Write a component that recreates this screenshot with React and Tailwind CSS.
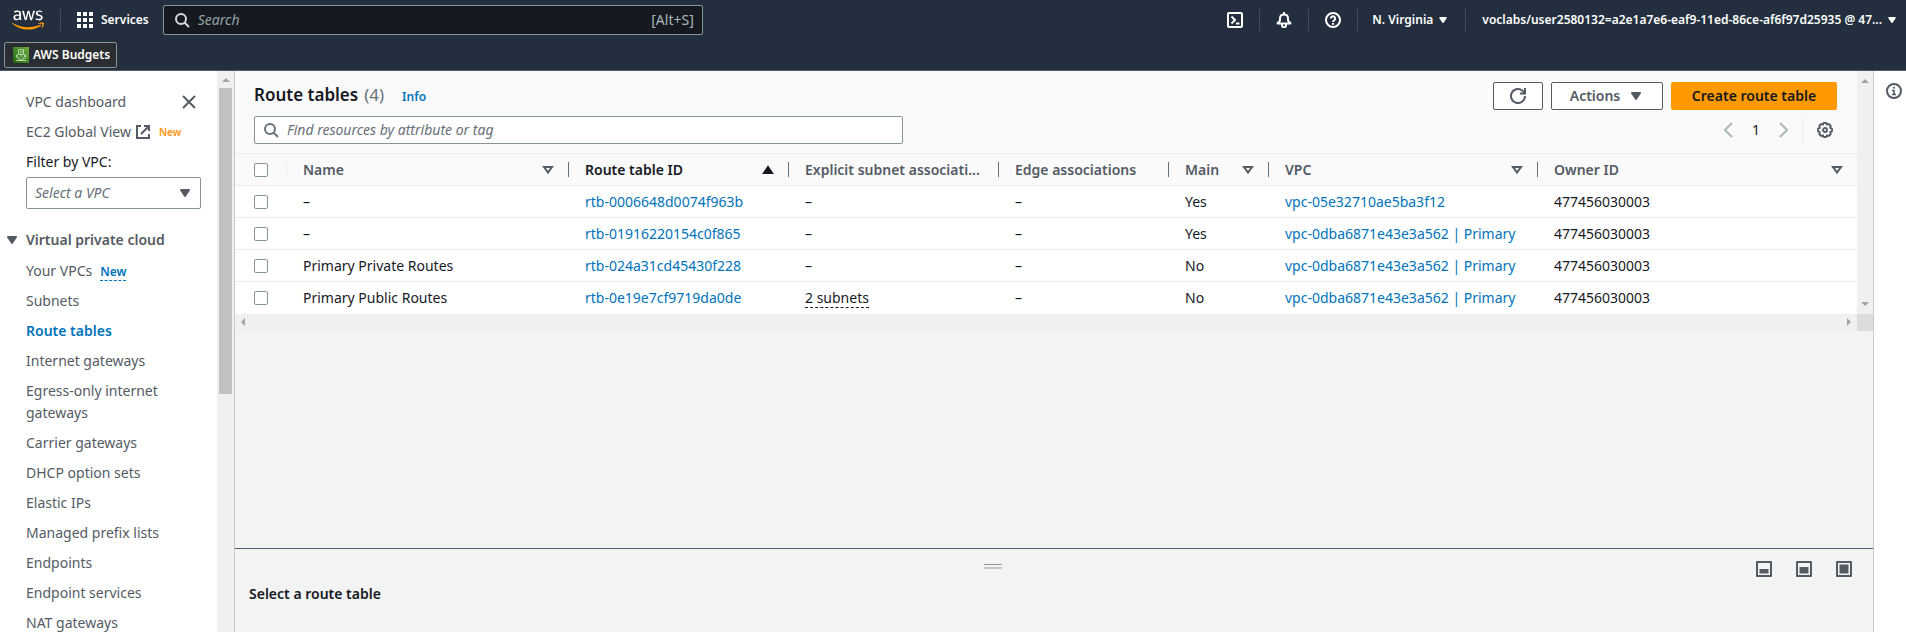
import React from "react";
import { FaAws } from "react-icons/fa";

function Svg({ size = 16, className = "", children }) {
  return (
    <svg viewBox="0 0 16 16" width={size} height={size} fill="none" stroke="currentColor" strokeWidth="2" className={`shrink-0 ${className}`} aria-hidden="true">
      {children}
    </svg>
  );
}

const SearchIcon = ({ className }) => (
  <Svg className={className}>
    <circle cx="7" cy="7" r="5" />
    <path d="M15 15l-4.5-4.5" />
  </Svg>
);
const CaretDown = ({ className, size = 16 }) => (
  <Svg size={size} className={className}>
    <path d="M4 5h8l-4 6z" fill="currentColor" strokeLinejoin="round" />
  </Svg>
);
const SortNone = () => (
  <Svg size={16}>
    <path d="M4 5h8l-4 5.6z" />
  </Svg>
);
const SortAsc = () => (
  <Svg size={16}>
    <path d="M4 11h8l-4-6z" fill="currentColor" />
  </Svg>
);
const CloseIcon = () => (
  <Svg size={16}>
    <path d="M2 2l12 12M14 2L2 14" />
  </Svg>
);
const ExternalIcon = () => (
  <Svg size={16} className="text-[#545b64]">
    <path d="M6 2H2v12h12v-4M9 2h5v5M13.5 2.5L6 10" />
  </Svg>
);
const RefreshIcon = () => (
  <Svg size={16}>
    <path d="M15 8a7 7 0 1 1-2-4.9L15 5M15 0v5.500H10" />
  </Svg>
);
const ShellIcon = () => (
  <Svg size={16}>
    <rect x="1" y="1" width="14" height="14" rx="1" />
    <path d="M4.500 4.500L8 8l-3.500 3.500M9 11.500h3.500" />
  </Svg>
);
const BellIcon = () => (
  <Svg size={16}>
    <path d="M8 0v2M1.500 11.500h13L12 8.500V6.500C12 4 10.500 2.500 8 2.500S4 4 4 6.500v2z" strokeLinejoin="round" />
    <path d="M6 12v1.500a2 1.800 0 0 0 4 0V12" />
  </Svg>
);
const HelpIcon = () => (
  <Svg size={16}>
    <circle cx="8" cy="8" r="7" />
    <path d="M5.800 6.500a2.200 2.200 0 1 1 3.400 1.800C8.400 8.800 8 9.200 8 10M8 11v1.800" />
  </Svg>
);
const InfoIcon = () => (
  <Svg size={16}>
    <circle cx="8" cy="8" r="7" />
    <path d="M6 7.500h2V12M6 11.500h4M7 4.700h2" strokeWidth="1.600" />
  </Svg>
);
const GearIcon = () => (
  <Svg size={16}>
    <path d="M6.600 1h2.800l.6 1.700 1.800-.7 2 2-.8 1.800 2 .8v2.800l-2 .8.8 1.800-2 2-1.800-.8-.6 1.800H6.600L6 13.200l-1.800.8-2-2 .8-1.800L1 9.400V6.600l2-.8L2.200 4l2-2 1.800.7z" strokeWidth="1.800" strokeLinejoin="round" />
    <circle cx="8" cy="8" r="2" strokeWidth="1.800" />
  </Svg>
);
const ChevronIcon = ({ flip }) => (
  <Svg size={16} className={flip ? "rotate-180" : ""}>
    <path d="M12 1L5 8l7 7" />
  </Svg>
);
const PanelIcon = ({ top }) => (
  <Svg size={16}>
    <rect x="1" y="1" width="14" height="14" strokeLinejoin="round" />
    <path d={`M3.500 ${top}h9v${12.5 - top}h-9z`} fill="currentColor" stroke="none" />
  </Svg>
);
const BudgetsIcon = () => (
  <svg viewBox="0 0 16 16" width="16" height="16" className="shrink-0" fill="none" stroke="#e9f5e4" strokeWidth="0.7" aria-hidden="true">
    <defs>
      <linearGradient id="budgets" x1="0" y1="1" x2="1" y2="0">
        <stop offset="0" stopColor="#1b660f" />
        <stop offset="1" stopColor="#6cae3e" />
      </linearGradient>
    </defs>
    <rect width="16" height="16" fill="url(#budgets)" stroke="none" />
    <path d="M5.500 2.800h5v4.700h-5zM6.800 6.200l1-1.300.8.600 1-1.300M3.300 7.500v2.700l2 1.800h1.900v1.500M12.700 7.500v2.700l-2 1.800H8.800v1.500M4.500 7.500v2l1.500 1.300M11.500 7.500v2L10 10.800M8 7.500v3M2.800 13.500h10.400" />
  </svg>
);
const ScrollArrow = ({ d, className = "" }) => (
  <svg viewBox="0 0 8 8" width="8" height="8" fill="#a3a3a3" className={className} aria-hidden="true">
    <path d={d} />
  </svg>
);

const NavDivider = () => <span className="h-[22px] w-px bg-[#414d5c]" />;

function TopBar() {
  return (
    <header className="shrink-0 border-b border-[#545b64] bg-[#232f3e] text-xs font-semibold text-white">
      <div className="flex h-10 items-center">
        <svg width="0" height="0" className="absolute" aria-hidden="true">
          <linearGradient id="aws" gradientUnits="userSpaceOnUse" x1="0" y1="0" x2="0" y2="512">
            <stop offset="0.560" stopColor="#fff" />
            <stop offset="0.560" stopColor="#ff9900" />
          </linearGradient>
        </svg>
        <a href="#home" aria-label="AWS" className="ml-3 mr-4 shrink-0">
          <FaAws fill="url(#aws)" className="h-[26px] w-8" />
        </a>
        <NavDivider />
        <button className="ml-4 flex items-center gap-2">
          <svg viewBox="0 0 16 16" width="16" height="16" fill="#fff" aria-hidden="true">
            <path d="M0 0h4v4H0zM6 0h4v4H6zM12 0h4v4h-4zM0 6h4v4H0zM6 6h4v4H6zM12 6h4v4h-4zM0 12h4v4H0zM6 12h4v4H6zM12 12h4v4h-4z" />
          </svg>
          Services
        </button>
        <label className="ml-3.5 flex h-[30px] w-[540px] items-center rounded-xs border border-[#879596] bg-[#161a20] pl-2.5 pr-2 text-sm font-normal">
          <SearchIcon className="text-[#d5dbdb]" />
          <input aria-label="Search" placeholder="Search" className="ml-2 min-w-0 flex-1 bg-transparent outline-none placeholder:italic placeholder:text-[#95a5a6]" />
          <span className="text-[#aab7b8]">[Alt+S]</span>
        </label>
        <div className="ml-auto flex items-center">
          <button aria-label="CloudShell" className="px-4"><ShellIcon /></button>
          <NavDivider />
          <button aria-label="Notifications" className="px-4"><BellIcon /></button>
          <NavDivider />
          <button aria-label="Help" className="px-4"><HelpIcon /></button>
          <NavDivider />
          <button className="flex items-center gap-1 pl-3.5 pr-4">N. Virginia <CaretDown size={12} /></button>
          <NavDivider />
          <button className="flex items-center gap-1 pl-4 pr-2">
            <span>voclabs/user2580132=a2e1a7e6-eaf9-11ed-86ce-af6f97d25935 @ 47...</span>
            <CaretDown size={12} />
          </button>
        </div>
      </div>
      <div className="flex h-[30px] items-start px-1 pt-0.5">
        <a href="#budgets" className="flex h-[26px] items-center gap-1 rounded-xs border border-[#879596] bg-[#2a2e33] pl-2 pr-1.5">
          <BudgetsIcon />
          AWS Budgets
        </a>
      </div>
    </header>
  );
}

const navLinks = [
  { label: "Your VPCs", isNew: true },
  { label: "Subnets" },
  { label: "Route tables", active: true },
  { label: "Internet gateways" },
  { label: "Egress-only internet gateways" },
  { label: "Carrier gateways" },
  { label: "DHCP option sets" },
  { label: "Elastic IPs" },
  { label: "Managed prefix lists" },
  { label: "Endpoints" },
  { label: "Endpoint services" },
  { label: "NAT gateways" },
];

function SideNav() {
  return (
    <div className="flex w-[235px] shrink-0 border-r border-[#c6cccc] bg-white">
      <nav className="min-w-0 flex-1 overflow-hidden pl-[26px] pr-4 pt-5 leading-[22px] text-[#545b64]">
        <div className="flex items-center justify-between pr-1">
          <a href="#dashboard">VPC dashboard</a>
          <button aria-label="Close navigation"><CloseIcon /></button>
        </div>
        <a href="#global" className="mt-2 flex items-center gap-1">
          EC2 Global View <ExternalIcon />
          <span className="ml-1 text-[10px] font-bold text-[#ff9d2e]">New</span>
        </a>
        <label htmlFor="vpc-filter" className="mt-2 block text-[#16191f]">Filter by VPC:</label>
        <div className="mt-1 grid items-center">
          <select id="vpc-filter" className="col-start-1 row-start-1 h-8 w-full appearance-none rounded-xs border border-[#879596] bg-white px-2 italic text-[#687078]">
            <option>Select a VPC</option>
          </select>
          <CaretDown className="pointer-events-none col-start-1 row-start-1 mr-2 justify-self-end text-[#545b64]" />
        </div>
        <button className="-ml-[22px] mt-5 flex items-center gap-1.5 font-semibold">
          <CaretDown />
          Virtual private cloud
        </button>
        <ul className="mt-[9px] flex flex-col gap-2">
          {navLinks.map((item) => (
            <li key={item.label}>
              <a href="#nav" className={item.active ? "font-semibold text-[#0073bb]" : ""}>{item.label}</a>
              {item.isNew && <a href="#new" className="ml-2 border-b border-dashed border-[#0073bb] text-xs font-semibold text-[#0073bb]">New</a>}
            </li>
          ))}
        </ul>
      </nav>
      <div className="flex w-[17px] shrink-0 flex-col items-center bg-[#f0f0f0]" aria-hidden="true">
        <div className="flex h-[17px] items-center"><ScrollArrow d="M0 6l4-4 4 4z" /></div>
        <div className="h-[306px] w-[13px] bg-[#c1c1c1]" />
      </div>
    </div>
  );
}

const columns = [
  { label: "Name", width: "w-[282px]", sort: "none" },
  { label: "Route table ID", width: "w-[220px]", sort: "asc" },
  { label: "Explicit subnet associati...", width: "w-[210px]" },
  { label: "Edge associations", width: "w-[170px]" },
  { label: "Main", width: "w-[100px]", sort: "none" },
  { label: "VPC", width: "w-[269px]", sort: "none" },
  { label: "Owner ID", width: "", sort: "none" },
];

const rows = [
  { name: "–", id: "rtb-0006648d0074f963b", subnets: "–", main: "Yes", vpc: "vpc-05e32710ae5ba3f12" },
  { name: "–", id: "rtb-01916220154c0f865", subnets: "–", main: "Yes", vpc: "vpc-0dba6871e43e3a562 | Primary" },
  { name: "Primary Private Routes", id: "rtb-024a31cd45430f228", subnets: "–", main: "No", vpc: "vpc-0dba6871e43e3a562 | Primary" },
  { name: "Primary Public Routes", id: "rtb-0e19e7cf9719da0de", subnets: "2 subnets", main: "No", vpc: "vpc-0dba6871e43e3a562 | Primary" },
];

const Check = ({ label }) => (
  <input type="checkbox" aria-label={label} className="block size-3.5 appearance-none rounded-xs border border-[#879596] bg-white" />
);

function RouteTable() {
  return (
    <table className="w-full table-fixed border-collapse text-left">
      <thead>
        <tr className="h-8 border-y border-[#eaeded] bg-[#fafafa] text-[#545b64]">
          <th className="w-[52px] p-0">
            <div className="flex items-center justify-between pl-[19px]">
              <Check label="Select all" />
              <span className="h-[15px] w-px bg-[#eaeded]" />
            </div>
          </th>
          {columns.map((c, i) => (
            <th key={c.label} className={`p-0 pl-4 font-semibold ${c.width} ${c.sort === "asc" ? "text-[#16191f]" : ""}`}>
              <div className="flex items-center">
                <span className="min-w-0 flex-1 whitespace-nowrap">{c.label}</span>
                {c.sort && (
                  <button aria-label={`Sort by ${c.label}`} className="mr-3">
                    {c.sort === "asc" ? <SortAsc /> : <SortNone />}
                  </button>
                )}
                {i < columns.length - 1 && <span className="h-[15px] w-px bg-[#687078]" />}
              </div>
            </th>
          ))}
        </tr>
      </thead>
      <tbody className="bg-white text-[#16191f]">
        {rows.map((r) => (
          <tr key={r.id} className="h-8 border-b border-[#eaeded] last:border-b-0">
            <td className="p-0 pl-[19px]"><Check label={`Select ${r.id}`} /></td>
            <td className="p-0 pl-4">{r.name}</td>
            <td className="p-0 pl-4"><a href="#rtb" className="text-[#0073bb]">{r.id}</a></td>
            <td className="p-0 pl-4">
              {r.subnets === "–" ? r.subnets : <button className="border-b border-dashed border-[#16191f] leading-[18px]">{r.subnets}</button>}
            </td>
            <td className="p-0 pl-4">–</td>
            <td className="p-0 pl-4">{r.main}</td>
            <td className="p-0 pl-4"><a href="#vpc" className="text-[#0073bb]">{r.vpc}</a></td>
            <td className="p-0 pl-4">477456030003</td>
          </tr>
        ))}
      </tbody>
    </table>
  );
}

function RouteTablesPanel() {
  return (
    <section>
      <div className="flex">
        <div className="min-w-0 flex-1 bg-[#fafafa]">
          <div className="flex items-start justify-between pl-[19px] pr-5 pt-[11px]">
            <h1 className="flex items-baseline text-[17px] leading-[26px] font-semibold text-[#16191f]">
              Route tables
              <span className="ml-1.5 font-normal text-[#687078]">(4)</span>
              <a href="#info" className="ml-[18px] text-xs font-semibold text-[#0073bb]">Info</a>
            </h1>
            <div className="flex gap-2 font-semibold text-[#545b64]">
              <button aria-label="Refresh" className="flex h-7 w-[50px] items-center justify-center rounded-xs border border-[#545b64] bg-white"><RefreshIcon /></button>
              <button className="flex h-7 w-28 items-center justify-center gap-2 rounded-xs border border-[#545b64] bg-white">Actions <CaretDown /></button>
              <button className="h-7 w-[166px] rounded-xs bg-[#ff9900] text-[#16191f]">Create route table</button>
            </div>
          </div>
          <div className="flex items-center justify-between pb-[9px] pl-[19px] pr-5 pt-1.5">
            <label className="flex h-7 w-[41%] items-center rounded-xs border border-[#879596] bg-white px-2">
              <SearchIcon className="text-[#687078]" />
              <input aria-label="Find resources" placeholder="Find resources by attribute or tag" className="ml-2 min-w-0 flex-1 bg-transparent outline-none placeholder:italic placeholder:text-[#687078]" />
            </label>
            <div className="flex items-center text-[#16191f]">
              <button aria-label="Previous page" className="text-[#aab7b8]"><ChevronIcon /></button>
              <span className="w-10 text-center">1</span>
              <button aria-label="Next page" className="text-[#aab7b8]"><ChevronIcon flip /></button>
              <span className="ml-2.5 h-7 w-px bg-[#eaeded]" />
              <button aria-label="Preferences" className="ml-3.5 mr-1 text-[#545b64]"><GearIcon /></button>
            </div>
          </div>
          <RouteTable />
        </div>
        <div className="flex w-4 shrink-0 flex-col items-center justify-between bg-[#f0f0f0] py-1.5" aria-hidden="true">
          <ScrollArrow d="M0 6l4-4 4 4z" />
          <ScrollArrow d="M0 2l4 4 4-4z" />
        </div>
      </div>
      <div className="flex h-[17px] bg-[#f0f0f0]" aria-hidden="true">
        <div className="flex flex-1 items-center justify-between px-1">
          <ScrollArrow d="M6 0v8L2 4z" />
          <ScrollArrow d="M2 0v8l4-4z" />
        </div>
        <div className="w-4 bg-[#dcdcdc]" />
      </div>
    </section>
  );
}

function SplitPanel() {
  return (
    <section className="h-[84px] shrink-0 border-t border-[#545b64] bg-[#f2f3f3] pl-3.5 pr-[21px]">
      <div className="flex h-[34px] items-center">
        <div className="flex flex-1 justify-center">
          <button aria-label="Resize panel" className="flex w-[18px] flex-col gap-[2px]">
            <span className="h-px w-full bg-[#959595]" />
            <span className="h-[2px] w-full bg-[#c6c6c6]" />
          </button>
        </div>
        <div className="flex gap-6 pl-5 pt-1.5 text-[#545b64]">
          <button aria-label="Small panel"><PanelIcon top={8} /></button>
          <button aria-label="Medium panel"><PanelIcon top={6} /></button>
          <button aria-label="Full panel"><PanelIcon top={3.5} /></button>
        </div>
      </div>
      <h2 className="font-semibold leading-[22px] text-[#16191f]">Select a route table</h2>
    </section>
  );
}

export default function App() {
  return (
    <div className="flex h-screen flex-col overflow-hidden font-['Noto_Sans',sans-serif] text-sm [&_button]:cursor-pointer">
      <TopBar />
      <div className="flex min-h-0 flex-1">
        <SideNav />
        <main className="flex min-w-0 flex-1 flex-col bg-[#f2f3f3]">
          <div className="min-h-0 flex-1"><RouteTablesPanel /></div>
          <SplitPanel />
        </main>
        <aside className="flex w-[33px] shrink-0 items-start justify-center border-l border-[#c6cccc] bg-white pl-[7px] pt-3 text-[#545b64]">
          <button aria-label="Info"><InfoIcon /></button>
        </aside>
      </div>
    </div>
  );
}
